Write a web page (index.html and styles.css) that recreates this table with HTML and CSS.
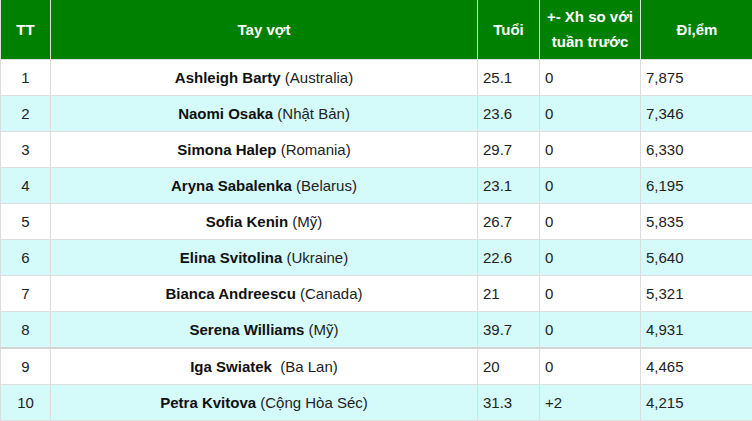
FILE: index.html
```html
<!DOCTYPE html>
<html lang="vi">
<head>
<meta charset="utf-8">
<title>Bảng xếp hạng WTA</title>
<link rel="stylesheet" href="styles.css">
</head>
<body>
<table class="rank">
  <colgroup>
    <col class="c-tt"><col class="c-name"><col class="c-age"><col class="c-diff"><col class="c-pts">
  </colgroup>
  <thead>
    <tr>
      <th>TT</th>
      <th>Tay vợt</th>
      <th>Tuổi</th>
      <th>+- Xh so với tuần trước</th>
      <th>Đi,ểm</th>
    </tr>
  </thead>
  <tbody>
    <tr><td class="num">1</td><td class="name"><b>Ashleigh Barty</b> (Australia)</td><td>25.1</td><td>0</td><td>7,875</td></tr>
    <tr class="alt"><td class="num">2</td><td class="name"><b>Naomi Osaka</b> (Nhật Bản)</td><td>23.6</td><td>0</td><td>7,346</td></tr>
    <tr><td class="num">3</td><td class="name"><b>Simona Halep</b> (Romania)</td><td>29.7</td><td>0</td><td>6,330</td></tr>
    <tr class="alt"><td class="num">4</td><td class="name"><b>Aryna Sabalenka</b> (Belarus)</td><td>23.1</td><td>0</td><td>6,195</td></tr>
    <tr><td class="num">5</td><td class="name"><b>Sofia Kenin</b> (Mỹ)</td><td>26.7</td><td>0</td><td>5,835</td></tr>
    <tr class="alt"><td class="num">6</td><td class="name"><b>Elina Svitolina</b> (Ukraine)</td><td>22.6</td><td>0</td><td>5,640</td></tr>
    <tr><td class="num">7</td><td class="name"><b>Bianca Andreescu</b> (Canada)</td><td>21</td><td>0</td><td>5,321</td></tr>
    <tr class="alt thick"><td class="num">8</td><td class="name"><b>Serena Williams</b> (Mỹ)</td><td>39.7</td><td>0</td><td>4,931</td></tr>
    <tr><td class="num">9</td><td class="name"><b>Iga Swiatek</b>&nbsp; (Ba Lan)</td><td>20</td><td>0</td><td>4,465</td></tr>
    <tr class="alt"><td class="num">10</td><td class="name"><b>Petra Kvitova</b> (Cộng Hòa Séc)</td><td>31.3</td><td>+2</td><td>4,215</td></tr>
  </tbody>
</table>
</body>
</html>
```
FILE: styles.css
```css
html, body {
  margin: 0;
  padding: 0;
  background: #ffffff;
}

.rank {
  border-collapse: collapse;
  table-layout: fixed;
  width: 753px;
  font-family: "Liberation Sans", Arial, sans-serif;
  font-size: 15px;
  color: #222222;
}

.c-tt { width: 50px; }
.c-name { width: 427px; }
.c-age { width: 62px; }
.c-diff { width: 101px; }
.c-pts { width: 113px; }

.rank th {
  background: #008000;
  color: #ffffff;
  font-weight: bold;
  text-align: center;
  line-height: 25px;
  padding: 4px 6px 5px;
  border-left: 1px solid #dddddd;
  border-right: 1px solid #dddddd;
  border-bottom: 1px solid #dddddd;
  height: 50px;
  vertical-align: middle;
}

.rank td {
  line-height: 25px;
  padding: 5px 5px;
  border: 1px solid #dddddd;
  text-align: left;
  vertical-align: middle;
}

.rank td.num,
.rank td.name {
  text-align: center;
}

.rank b {
  font-weight: bold;
  color: #111111;
}

.rank tr.alt td {
  background: #d4fafa;
}

.rank tr.thick td {
  border-bottom: 2px solid #d4d4d4;
}
```
